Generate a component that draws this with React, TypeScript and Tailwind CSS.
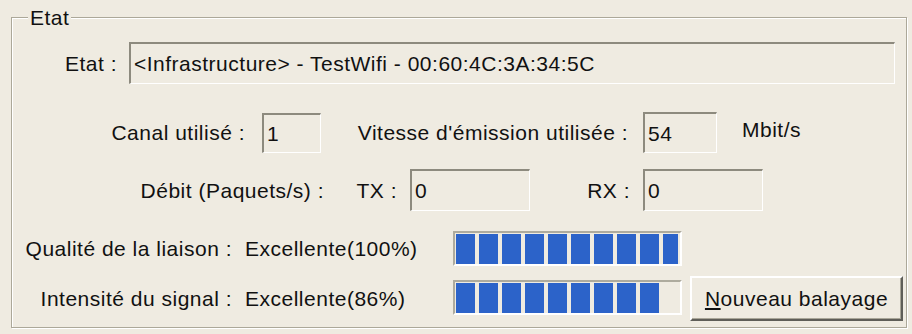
import React from 'react';

// sunken edit field, XP look
function Field({ value, className }: { value: string; className: string }) {
  return (
    <div
      className={`flex items-center border-t-2 border-l-2 border-b border-r border-t-[#8d8a7e] border-l-[#8d8a7e] border-b-white border-r-white pl-[3px] ${className}`}
    >
      {value}
    </div>
  );
}

function Bar({ blocks }: { blocks: number }) {
  return (
    <div className="w-[229px] h-[35px] border-t-2 border-l-2 border-b-2 border-r-2 border-t-[#aeab9e] border-l-[#aeab9e] border-b-white border-r-white pl-px pr-[2px] pt-px pb-px">
      <div className="h-[30px] overflow-hidden flex gap-[4px]">
        {Array.from({ length: blocks }).map((_, i) => (
          <div key={i} className="w-[19px] h-[30px] shrink-0 bg-[#2c63c9]" />
        ))}
      </div>
    </div>
  );
}

export default function App() {
  return (
    <div
      className="w-[912px] h-[334px] bg-[#efebe1] text-[#111] text-[21px] tracking-[0.5px] leading-none overflow-hidden pt-[17px]"
      style={{ fontFamily: '"Liberation Sans", Arial, sans-serif' }}
    >
      {/* Group box */}
      <div className="relative ml-[11px] w-[896px] h-[311px] border border-[#aca899] shadow-[inset_1px_1px_0_#fff,1px_1px_0_#fff]">
        <span className="absolute left-[16px] -top-[11px] px-[2px] bg-[#efebe1]">Etat</span>

        {/* Etat */}
        <div className="flex items-center mt-[24px]">
          <div className="w-[105px] text-right">Etat :</div>
          <Field value="<Infrastructure> - TestWifi - 00:60:4C:3A:34:5C" className="ml-[12px] w-[766px] h-[42px]" />
        </div>

        {/* Canal / Vitesse */}
        <div className="flex items-center mt-[28px]">
          <div className="w-[233px] text-right">Canal utilisé :</div>
          <Field value="1" className="ml-[17px] w-[59px] h-[40px]" />
          <div className="w-[307px] text-right">Vitesse d'émission utilisée :</div>
          <Field value="54" className="ml-[15px] w-[74px] h-[41px]" />
          <div className="ml-[25px] -mt-[6px]">Mbit/s</div>
        </div>

        {/* Débit */}
        <div className="flex items-center mt-[16px]">
          <div className="w-[312px] text-right">Débit (Paquets/s) :</div>
          <div className="w-[73px] text-right">TX :</div>
          <Field value="0" className="ml-[13px] w-[120px] h-[42px]" />
          <div className="w-[100px] text-right">RX :</div>
          <Field value="0" className="ml-[13px] w-[120px] h-[42px]" />
        </div>

        {/* Qualité */}
        <div className="flex items-center mt-[20px]">
          <div className="w-[220px] text-right">Qualité de la liaison :</div>
          <div className="ml-[13px] w-[208px]">Excellente(100%)</div>
          <Bar blocks={10} />
        </div>

        {/* Intensité */}
        <div className="flex items-center mt-[10px]">
          <div className="w-[220px] text-right">Intensité du signal :</div>
          <div className="ml-[13px] w-[208px]">Excellente(86%)</div>
          <div className="-mt-[3px]">
            <Bar blocks={9} />
          </div>
          <button className="ml-[8px] w-[213px] h-[45px] bg-[#efebe1] border-t-2 border-l-2 border-b-2 border-r-2 border-t-white border-l-white border-b-[#5f5e58] border-r-[#5f5e58] shadow-[inset_-1px_-1px_0_#a9a698] tracking-[0.5px]">
            <span className="underline underline-offset-2">N</span>ouveau balayage
          </button>
        </div>
      </div>
    </div>
  );
}
